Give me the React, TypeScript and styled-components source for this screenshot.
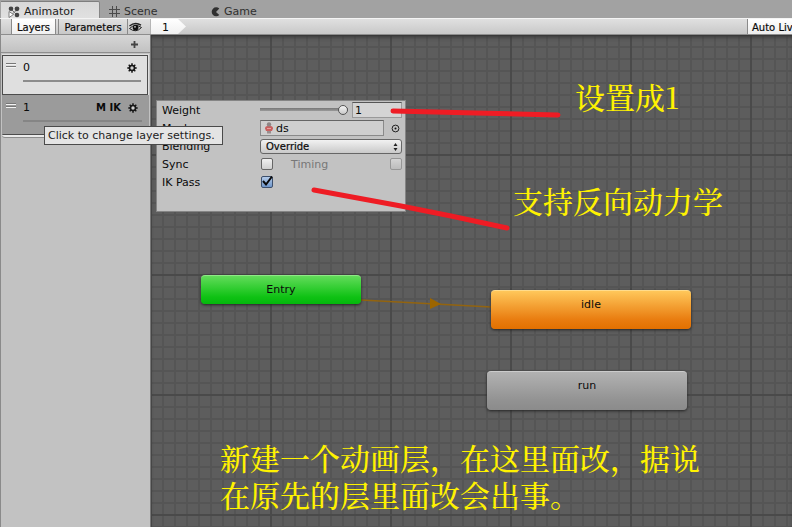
import React from 'react';
import styled, { createGlobalStyle } from 'styled-components';

const GlobalStyle = createGlobalStyle`
  * { box-sizing: border-box; }
  body { margin: 0; overflow: hidden; }
  body, button, input, select {
    font-family: "DejaVu Sans", "Noto Sans CJK SC", sans-serif;
    font-size: 11px;
    color: #0a0a0a;
  }
  button { border: 0; padding: 0; background: none; }
`;

const Window = styled.div`
  position: relative;
  display: flex;
  flex-direction: column;
  height: 100vh;
  overflow: hidden;
  background: #a2a2a2;
`;

const TabBar = styled.nav`
  display: flex;
  flex: none;
  height: 18px;
  padding: 1px 0 0 1px;
`;

const Tab = styled.button<{ $active?: boolean; $width: number }>`
  display: flex;
  align-items: center;
  gap: 3px;
  width: ${(p) => p.$width}px;
  height: 17px;
  padding: 3px 0 0 ${(p) => (p.$active ? 7 : 9)}px;
  color: ${(p) => (p.$active ? '#1c1c1c' : '#303030')};
  border-top: 1px solid ${(p) => (p.$active ? '#7e7e7e' : 'transparent')};
  border-right: 1px solid ${(p) => (p.$active ? '#868686' : 'transparent')};
  border-radius: 0 2px 0 0;
  background: ${(p) => (p.$active ? 'linear-gradient(#d8d8d8, #e0e0e0)' : 'none')};
  svg { flex: none; }
`;

const Toolbar = styled.div`
  display: flex;
  flex: none;
  height: 17px;
  border-top: 1px solid #f4f4f4;
  border-bottom: 1px solid #8d8d8d;
  background: linear-gradient(#e0e0e0, #c8c8c8);
`;

const PaneSwitch = styled.div`
  display: flex;
  flex: none;
  width: 151px;
  padding-left: 11px;
  border-left: 1px solid #8a8a8a;
  border-right: 1px solid #b5b5b5;
`;

const PaneButton = styled.button<{ $active?: boolean; $width: number }>`
  display: flex;
  align-items: center;
  justify-content: center;
  flex: none;
  width: ${(p) => p.$width}px;
  padding-top: 1px;
  font-size: 10px;
  -webkit-text-stroke: 0.2px #0a0a0a;
  border-right: ${(p) => (p.$active !== undefined ? '1px solid #8a8a8a' : '0')};
  background: ${(p) => (p.$active ? 'linear-gradient(#ffffff, #f0f0f0)' : 'none')};
  margin-right: ${(p) => (p.$active ? '3px' : '0')};
  box-shadow: ${(p) => (p.$active !== undefined ? '-1px 0 #8a8a8a' : 'none')};
`;

const Crumb = styled.button`
  width: 35px;
  padding: 2px 6px 0 0;
  text-align: center;
  background: linear-gradient(#ffffff, #f0f0f0);
  clip-path: polygon(0 0, 27px 0, 35px 50%, 27px 100%, 0 100%);
`;

const LiveLink = styled.button`
  width: 45px;
  margin-left: auto;
  padding: 1px 0 0 4px;
  overflow: hidden;
  white-space: nowrap;
  text-align: left;
  font-size: 10px;
  -webkit-text-stroke: 0.2px #0a0a0a;
  border-left: 1px solid #8a8a8a;
  background: linear-gradient(#ffffff, #ededed);
`;

const Body = styled.div`
  display: flex;
  flex: 1;
  min-height: 0;
`;

const Sidebar = styled.aside`
  flex: none;
  width: 151px;
  border-left: 1px solid #8a8a8a;
  border-right: 1px solid #777;
  background: #c2c2c2;
`;

const SidebarHeader = styled.div`
  display: flex;
  justify-content: flex-end;
  align-items: center;
  height: 18px;
  padding: 2px 11px 0 0;
  border-bottom: 1px solid #8e8e8e;
  background: linear-gradient(#d6d6d6, #c2c2c2);
`;

const LayerList = styled.ul`
  list-style: none;
  margin: 1px 1px 0;
  padding: 1px 0 0;
  background: #dedede;
  border-bottom: 2px solid #eaeaea;
  border-radius: 0 0 3px 3px;
  box-shadow: 0 1px #8c8c8c;
`;

const Layer = styled.li<{ $selected?: boolean }>`
  display: grid;
  grid-template-columns: 17px 1fr auto 20px;
  grid-template-rows: 23px 2px;
  row-gap: 1px;
  align-items: center;
  height: 40px;
  padding-left: 3px;
  border: 1px solid ${(p) => (p.$selected ? '#9a9a9a' : '#4c4c4c')};
  border-bottom-color: #4c4c4c;
  margin-right: ${(p) => (p.$selected ? '0' : '1px')};
  background: ${(p) => (p.$selected ? '#9b9b9b' : '#dfdfdf')};
  & > svg { align-self: start; margin-top: 7px; }
`;

const LayerFlags = styled.span`
  font-size: 10px;
  font-weight: bold;
  padding-right: 7px;
`;

const WeightBar = styled.span<{ $dim?: boolean }>`
  grid-column: 2 / 5;
  height: 2px;
  margin-right: 6px;
  background: ${(p) => (p.$dim ? '#858585' : '#8c8c8c')};
`;

const IconButton = styled.button`
  display: flex;
  align-items: center;
`;

const Canvas = styled.main`
  position: relative;
  flex: 1;
  overflow: hidden;
  background-color: #5d5d5d;
  background-image:
    linear-gradient(90deg, #4a4a4a 2px, transparent 2px),
    linear-gradient(#4a4a4a 2px, transparent 2px),
    linear-gradient(90deg, #555555 2px, transparent 2px),
    linear-gradient(#555555 2px, transparent 2px);
  background-size: 120px 120px, 120px 120px, 12px 12px, 12px 12px;
  background-position: -1px -1px;
  box-shadow: inset 0 4px 4px -2px #333;
`;

const Drawing = styled.svg`
  position: absolute;
  inset: 0;
  width: 100%;
  height: 100%;
  pointer-events: none;
`;

const fills = {
  green: ['#62dc5a', '#0fc214', '#04b80c', '#8eea86'],
  orange: ['#ffc75a', '#e97d10', '#e37000', '#ffdc8c'],
  gray: ['#b2b2b2', '#929292', '#8b8b8b', '#cccccc'],
};

const StateNode = styled.button<{ $x: number; $y: number; $w: number; $h: number; $tone: keyof typeof fills }>`
  position: absolute;
  left: ${(p) => p.$x}px;
  top: ${(p) => p.$y}px;
  width: ${(p) => p.$w}px;
  height: ${(p) => p.$h}px;
  padding-bottom: ${(p) => p.$h - 28}px;
  border-radius: 4px;
  border-top: 1px solid ${(p) => fills[p.$tone][3]};
  background: linear-gradient(${(p) => `${fills[p.$tone][0]}, ${fills[p.$tone][1]} 75%, ${fills[p.$tone][2]}`});
  box-shadow: 0 1px 3px #222;
`;

const SettingsPanel = styled.form`
  position: absolute;
  left: 5px;
  top: 65px;
  display: grid;
  grid-template-columns: 98px minmax(0, 1fr);
  grid-auto-rows: 18px;
  align-items: center;
  width: 250px;
  height: 112px;
  padding: 0 3px 0 5px;
  border: 1px solid #858585;
  background: #c2c2c2;
`;

const Field = styled.div`
  display: flex;
  align-items: center;
`;

const Slider = styled.input`
  appearance: none;
  flex: none;
  width: 88px;
  height: 12px;
  margin: 0 4px 0 0;
  background: linear-gradient(transparent 4px, #777 4px, #999 7px, transparent 7px);
  &::-webkit-slider-thumb {
    appearance: none;
    width: 10px;
    height: 10px;
    border: 1px solid #555;
    border-radius: 50%;
    background: linear-gradient(#f4f4f4, #c8c8c8);
  }
`;

const TextBox = styled.input`
  flex: 1;
  min-width: 0;
  height: 16px;
  padding: 0 2px;
  border: 1px solid #999;
  border-top: 1px solid #555;
  background: #d4d4d4;
`;

const ObjectField = styled.span`
  display: flex;
  align-items: center;
  width: 124px;
  height: 16px;
  padding-left: 4px;
  border: 1px solid #8a8a8a;
  border-top-color: #666;
  background: #cfcfcf;
  input {
    flex: 1;
    min-width: 0;
    padding: 0 3px;
    border: 0;
    background: none;
  }
`;

const PickerButton = styled(IconButton)`
  margin-left: 7px;
`;

const SelectWrap = styled.span`
  position: relative;
  flex: 1;
  display: flex;
  svg { position: absolute; right: 4px; top: 4px; pointer-events: none; }
`;

const Select = styled.select`
  appearance: none;
  width: 100%;
  height: 15px;
  padding: 0 5px;
  font-size: 10px;
  -webkit-text-stroke: 0.2px #0a0a0a;
  border: 1px solid #666;
  border-radius: 3px;
  background: linear-gradient(#f2f2f2, #c9c9c9);
`;

const Check = styled.input`
  appearance: none;
  width: 12px;
  height: 12px;
  margin: 0 0 0 1px;
  border: 1px solid #666;
  border-radius: 2px;
  background: linear-gradient(#f0f0f0, #cfcfcf);
  &:checked { border-color: #3c4f6c; background: linear-gradient(#b4cbe9, #6f96ca); }
  &:disabled { border-color: #969696; background: linear-gradient(#d4d4d4, #bcbcbc); }
`;

const CheckMark = styled.span`
  position: relative;
  display: flex;
  svg { position: absolute; left: 1px; bottom: 1px; pointer-events: none; }
`;

const TimingLabel = styled.label`
  margin: 0 auto 0 18px;
  color: #777;
`;

const Tooltip = styled.div`
  position: absolute;
  left: 44px;
  top: 126px;
  height: 19px;
  padding: 0 7px 0 3px;
  line-height: 18px;
  white-space: nowrap;
  color: #222;
  border: 1px solid #4a4a4a;
  background: #e4e4e4;
`;

const Note = styled.p<{ $x: number; $y: number }>`
  position: absolute;
  left: ${(p) => p.$x}px;
  top: ${(p) => p.$y}px;
  width: 500px;
  margin: 0;
  font: 500 30px/37px "Noto Serif CJK SC", "Noto Sans CJK SC", serif;
  color: #fff200;
  pointer-events: none;
`;

const AnimatorIcon = () => (
  <svg width="13" height="12" viewBox="0 0 13 12">
    <path d="M3.5 3.5 9 9M9 3.5 3.5 9" stroke="#777" strokeWidth="1" />
    <g fill="#444">
      <circle cx="3" cy="2.8" r="2.3" /><circle cx="9" cy="2.8" r="2.4" /><circle cx="9" cy="9" r="2.3" />
    </g>
    <path d="M1 5.5 5.5 8.5 1 11.5Z" fill="#fff" stroke="#666" strokeWidth=".8" />
  </svg>
);
const GridIcon = () => (
  <svg width="12" height="12" viewBox="0 0 12 12">
    <path d="M3.5 0V11M7.5 0V11M0 3.5H11M0 7.5H11" stroke="#4a4a4a" fill="none" />
  </svg>
);
const GameIcon = () => (
  <svg width="10" height="10" viewBox="0 0 10 10">
    <path d="M8.3 1.6A4.5 4.5 0 1 0 8.3 8.1L5 5Z" fill="#303030" />
  </svg>
);
const EyeIcon = () => (
  <svg width="13" height="11" viewBox="0 0 13 11">
    <path d="M.5 6.5Q6 1 12.5 5.5Q7 11.5.5 6.5Z" fill="#ccc" stroke="#222" />
    <path d="M.5 4Q6-.5 12 3.2" stroke="#222" strokeWidth="1.4" fill="none" />
    <circle cx="6.6" cy="5.6" r="2.9" fill="#111" /><circle cx="6" cy="4.8" r=".9" fill="#ccc" />
  </svg>
);
const PlusIcon = () => (
  <svg width="9" height="9" viewBox="0 0 9 9"><path d="M4.5 1V8M1 4.5H8" stroke="#444" strokeWidth="1.8" /></svg>
);
const GearIcon = () => (
  <svg width="10" height="10" viewBox="0 0 10 10">
    <path d="M5 .3V9.7M.3 5H9.7M1.7 1.7 8.3 8.3M8.3 1.7 1.7 8.3" stroke="#161616" strokeWidth="1.5" />
    <circle cx="5" cy="5" r="2.5" fill="#d0d0d0" stroke="#161616" strokeWidth="1.6" />
  </svg>
);
const DragHandle = () => (
  <svg width="11" height="6" viewBox="0 0 11 6">
    <path d="M0 .5H10M0 3.5H10" stroke="#777" /><path d="M0 1.5H10M0 4.5H10" stroke="#f3f3f3" />
  </svg>
);
const AvatarIcon = () => (
  <svg width="8" height="12" viewBox="0 0 8 12">
    <path d="M2 6H6V11.5H2Z" fill="#9a8d8d" />
    <path d="M0 6.5Q0 4 2.5 4H5.5Q8 4 8 6.5L7 9H1Z" fill="#c9605f" />
    <circle cx="4" cy="2.4" r="2.2" fill="#8e8585" /><path d="M2 6.5H6" stroke="#e8a09c" />
  </svg>
);
const PickerIcon = () => (
  <svg width="9" height="9" viewBox="0 0 9 9">
    <circle cx="4.5" cy="4.5" r="3.4" fill="none" stroke="#222" /><circle cx="4.5" cy="4.5" r="1" fill="#111" />
  </svg>
);

export default function App() {
  return (
    <Window>
      <GlobalStyle />
      <TabBar>
        <Tab $active $width={99}><AnimatorIcon />Animator</Tab>
        <Tab $width={102}><GridIcon />Scene</Tab>
        <Tab $width={80}><GameIcon />Game</Tab>
      </TabBar>
      <Toolbar>
        <PaneSwitch>
          <PaneButton $active $width={44}>Layers</PaneButton>
          <PaneButton $active={false} $width={69}>Parameters</PaneButton>
          <PaneButton $width={14} aria-label="Toggle pane"><EyeIcon /></PaneButton>
        </PaneSwitch>
        <Crumb>1</Crumb>
        <LiveLink>Auto Live Link</LiveLink>
      </Toolbar>
      <Body>
        <Sidebar>
          <SidebarHeader><IconButton aria-label="Add layer"><PlusIcon /></IconButton></SidebarHeader>
          <LayerList>
            <Layer>
              <DragHandle /><span>0</span><span />
              <IconButton aria-label="Settings for layer 0"><GearIcon /></IconButton>
              <WeightBar />
            </Layer>
            <Layer $selected>
              <DragHandle /><span>1</span><LayerFlags>M IK</LayerFlags>
              <IconButton aria-label="Settings for layer 1"><GearIcon /></IconButton>
              <WeightBar $dim />
            </Layer>
          </LayerList>
        </Sidebar>
        <Canvas>
          <Drawing>
            <path d="M210 265 340 272" stroke="#93640f" strokeWidth="1.5" />
            <path d="M279 263 290 269 279 274Z" fill="#9c6500" />
          </Drawing>
          <StateNode $x={50} $y={240} $w={160} $h={29} $tone="green">Entry</StateNode>
          <StateNode $x={340} $y={255} $w={200} $h={39} $tone="orange">idle</StateNode>
          <StateNode $x={336} $y={336} $w={200} $h={39} $tone="gray">run</StateNode>
          <SettingsPanel>
            <label htmlFor="weight">Weight</label>
            <Field>
              <Slider type="range" min="0" max="1" step="0.01" defaultValue="1" aria-label="Weight slider" />
              <TextBox id="weight" defaultValue="1" />
            </Field>
            <label htmlFor="mask">Mask</label>
            <Field>
              <ObjectField><AvatarIcon /><input id="mask" defaultValue="ds" /></ObjectField>
              <PickerButton type="button" aria-label="Pick mask"><PickerIcon /></PickerButton>
            </Field>
            <label htmlFor="blending">Blending</label>
            <Field>
              <SelectWrap>
                <Select id="blending" defaultValue="Override"><option>Override</option><option>Additive</option></Select>
                <svg width="5" height="8" viewBox="0 0 5 8"><path d="M2.5 0 4.5 3H.5ZM2.5 8 .5 5H4.5Z" fill="#222" /></svg>
              </SelectWrap>
            </Field>
            <label htmlFor="sync">Sync</label>
            <Field>
              <Check type="checkbox" id="sync" />
              <TimingLabel htmlFor="timing">Timing</TimingLabel>
              <Check type="checkbox" id="timing" disabled />
            </Field>
            <label htmlFor="ik">IK Pass</label>
            <Field>
              <CheckMark>
                <Check type="checkbox" id="ik" defaultChecked />
                <svg width="12" height="12" viewBox="0 0 12 12"><path d="M2 6 5 9.5 11 1.5" fill="none" stroke="#0a0a0a" strokeWidth="2" /></svg>
              </CheckMark>
            </Field>
          </SettingsPanel>
          <Drawing>
            <g fill="none" stroke="#ee1c24" strokeWidth="5" strokeLinecap="round" strokeLinejoin="round">
              <path d="M242 76 284 77 325 78 366 79 407 80" />
              <path d="M163 155 250 171 300 181 356 193" />
            </g>
          </Drawing>
          <Note $x={424} $y={43}>设置成1</Note>
          <Note $x={362} $y={147}>支持反向动力学</Note>
          <Note $x={69} $y={404}>新建一个动画层，在这里面改，据说<br />在原先的层里面改会出事。</Note>
        </Canvas>
      </Body>
      <Tooltip role="tooltip">Click to change layer settings.</Tooltip>
    </Window>
  );
}
